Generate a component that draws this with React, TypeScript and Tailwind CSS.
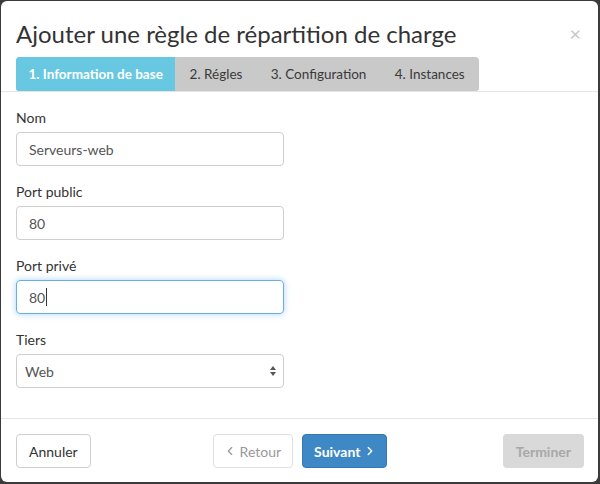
import { ChevronLeft, ChevronRight } from 'lucide-react';

const font = { fontFamily: 'Lato, "Open Sans", sans-serif' };

function Field({ label, children }: { label: string; children: React.ReactNode }) {
  return (
    <div className="mb-[16px]">
      <div className="text-[14px] leading-[20px] text-[#333] mb-[4px]">{label}</div>
      {children}
    </div>
  );
}

export default function App() {
  const tabs = ['2. Régles', '3. Configuration', '4. Instances'];

  return (
    <div className="w-[600px] h-[484px] bg-[#3b3b3b] pl-[1px] pt-[1px] pr-[2px] pb-[2px]" style={font}>
      <div className="h-full bg-white rounded-[6px] flex flex-col">
        <header className="border-b border-[#e5e5e5] pl-[15px] pr-[15px] pt-[20px]">
          <div className="flex items-start justify-between">
            <h1 className="text-[24px] leading-[26px] text-[#333] font-normal">
              Ajouter une règle de répartition de charge
            </h1>
            <span className="text-[20px] leading-[20px] text-[#c8c8c8] mt-[2px] mr-[2px]">×</span>
          </div>
          <div className="mt-[10px] inline-flex h-[34px] rounded-t-[4px] rounded-b-[3px] bg-[#c9c9c9] overflow-hidden text-[13.5px]">
            <div className="bg-[#69c8e1] text-white font-bold px-[12.5px] flex items-center">
              1. Information de base
            </div>
            {tabs.map((t) => (
              <div key={t} className="px-[14.2px] flex items-center text-[#3a3a3a]">
                {t}
              </div>
            ))}
          </div>
        </header>

        <main className="flex-1 pl-[15px] pt-[16px] pr-[15px]">
          <Field label="Nom">
            <div className="w-[268px] h-[34px] border border-[#cfcfcf] rounded-[4px] px-[12px] flex items-center text-[14px] text-[#555]">
              Serveurs-web
            </div>
          </Field>
          <Field label="Port public">
            <div className="w-[268px] h-[34px] border border-[#cfcfcf] rounded-[4px] px-[12px] flex items-center text-[14px] text-[#555]">
              80
            </div>
          </Field>
          <Field label="Port privé">
            <div className="w-[268px] h-[34px] border border-[#66afe9] rounded-[4px] px-[12px] flex items-center text-[14px] text-[#555] shadow-[0_0_6px_rgba(102,175,233,0.55)]">
              80
              <span className="w-[1px] h-[18px] bg-[#333] ml-[1px]" />
            </div>
          </Field>
          <Field label="Tiers">
            <div className="w-[268px] h-[34px] border border-[#cfcfcf] rounded-[4px] pl-[8px] pr-[6px] flex items-center justify-between text-[14px] text-[#555]">
              <span>Web</span>
              <svg width="8" height="14" viewBox="0 0 8 14" className="text-[#555]">
                <path d="M4 2 L7 6 L1 6 Z" fill="currentColor" />
                <path d="M4 12 L7 8 L1 8 Z" fill="currentColor" />
              </svg>
            </div>
          </Field>
        </main>

        <footer className="border-t border-[#e5e5e5] pl-[15px] pr-[14px] pt-[15px] pb-[14px] flex items-center text-[14px]">
          <div className="flex-1">
            <button className="h-[34px] px-[12px] border border-[#cfcfcf] rounded-[4px] text-[#333] bg-white">
              Annuler
            </button>
          </div>
          <div className="flex gap-[9px]">
            <button className="h-[34px] pl-[9px] pr-[11px] border border-[#e0e0e0] rounded-[4px] text-[#999] bg-white flex items-center gap-[3px]">
              <ChevronLeft size={14} strokeWidth={2} />
              Retour
            </button>
            <button className="h-[34px] pl-[11px] pr-[9px] border border-[#3577b0] rounded-[4px] text-white font-bold bg-[#3e88c5] flex items-center gap-[3px]">
              Suivant
              <ChevronRight size={14} strokeWidth={2.5} />
            </button>
          </div>
          <div className="flex-1 flex justify-end">
            <button className="h-[34px] px-[13px] rounded-[4px] text-[#a8a8a8] font-bold bg-[#d9d9d9]">
              Terminer
            </button>
          </div>
        </footer>
      </div>
    </div>
  );
}
